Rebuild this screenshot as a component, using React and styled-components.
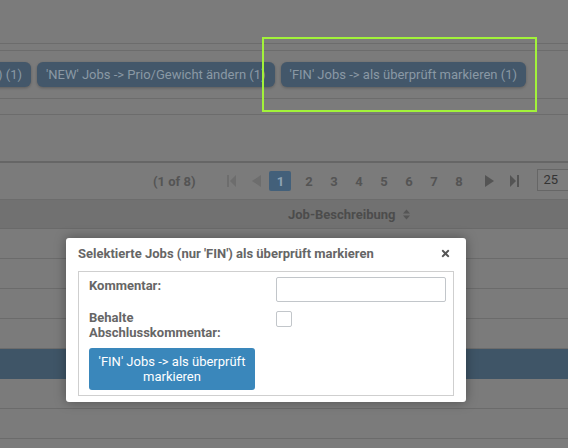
import React from "react";
import styled, { createGlobalStyle } from "styled-components";
import { FaTimes } from "react-icons/fa";

const Global = createGlobalStyle`
  html, body { margin: 0; padding: 0; }
  body { width: 568px; height: 448px; overflow: hidden; background: #7b7b7b; font-family: Roboto, "Liberation Sans", sans-serif; }
`;

const Page = styled.div`
  position: relative;
  width: 568px;
  height: 448px;
  overflow: hidden;
  background: #7b7b7b;
  font-family: Roboto, "Liberation Sans", sans-serif;
`;

const Band = styled.div`
  height: ${(p) => p.$h}px;
  border-bottom: ${(p) => p.$bw || 1}px solid ${(p) => p.$bc || "#6c6c6c"};
  background: ${(p) => p.$bg || "transparent"};
`;

const Toolbar = styled.div`
  height: 47px;
  border-bottom: 1px solid #6c6c6c;
  display: flex;
  align-items: center;
  justify-content: flex-end;
  gap: 6px;
  padding-right: 42px;
  overflow: hidden;
  white-space: nowrap;
`;

const ToolButton = styled.div`
  flex: none;
  height: 25px;
  line-height: 25px;
  padding: 0 9px;
  border-radius: 6px;
  background: #43576a;
  color: #8a99a5;
  font-size: 13px;
  box-shadow: 0 1px 3px rgba(0, 0, 0, 0.25);
`;

const Paginator = styled.div`
  height: 36px;
  border-bottom: 1px solid #6c6c6c;
  display: flex;
  align-items: center;
  padding-left: 153px;
  white-space: nowrap;
  color: #545454;
  font-size: 13px;
  font-weight: 700;
`;

const Report = styled.span`
  margin-right: 24px;
`;

const Cell = styled.span`
  flex: none;
  width: ${(p) => p.$w || 25}px;
  height: 20px;
  margin-left: ${(p) => p.$ml || 0}px;
  margin-right: ${(p) => p.$mr || 0}px;
  display: flex;
  align-items: center;
  justify-content: center;
  border-radius: 2px;
  background: ${(p) => (p.$active ? "#43607a" : "transparent")};
  color: ${(p) => (p.$active ? "#8ea3b4" : "#545454")};
`;

const PerPage = styled.div`
  flex: none;
  width: 50px;
  height: 22px;
  margin-left: 10px;
  margin-top: -2px;
  box-sizing: border-box;
  border: 1px solid #666;
  border-right: none;
  padding-left: 5px;
  line-height: 20px;
  font-weight: 400;
  font-size: 13px;
  color: #333;
  background: #7d7d7d;
`;

const HeaderRow = styled.div`
  height: 28px;
  border-bottom: 1px solid #6a6a6a;
  background: #717171;
  display: flex;
  align-items: center;
  padding-left: 288px;
  gap: 7px;
  color: #4c4c4c;
  font-size: 13px;
  font-weight: 700;
`;

const Row = styled.div`
  height: 29px;
  border-bottom: 1px solid ${(p) => (p.$selected ? "#3f5567" : "#6b6b6b")};
  background: ${(p) => (p.$selected ? "#3f5567" : "transparent")};
`;

const Highlight = styled.div`
  position: absolute;
  left: 262px;
  top: 37px;
  width: 275px;
  height: 75px;
  box-sizing: border-box;
  border: 2px solid #a2f23a;
`;

const Dialog = styled.div`
  position: absolute;
  left: 66px;
  top: 238px;
  width: 400px;
  height: 164px;
  box-sizing: border-box;
  background: #fff;
  border-radius: 3px;
  box-shadow: 0 0 12px rgba(0, 0, 0, 0.35);
  display: flex;
  flex-direction: column;
  padding: 0 12px 6px;
`;

const TitleBar = styled.div`
  height: 33px;
  display: flex;
  align-items: center;
  justify-content: space-between;
  padding-bottom: 3px;
  box-sizing: border-box;
`;

const Title = styled.span`
  font-size: 13px;
  font-weight: 700;
  color: #666;
`;

const Close = styled.span`
  display: flex;
  margin-right: 3px;
  color: #555;
  font-size: 11px;
`;

const Panel = styled.div`
  flex: 1;
  border: 1px solid #cfcfcf;
  padding: 5px 8px 4px 10px;
  display: grid;
  grid-template-columns: 187px 170px;
  row-gap: 8px;
  align-content: start;
`;

const Label = styled.label`
  font-size: 13px;
  font-weight: 700;
  color: #666;
  line-height: 15px;
  padding-top: ${(p) => p.$pt || 0}px;
`;

const TextInput = styled.div`
  height: 25px;
  box-sizing: border-box;
  border: 1px solid #c2c6ca;
  border-radius: 2px;
`;

const Checkbox = styled.div`
  width: 16px;
  height: 16px;
  box-sizing: border-box;
  border: 1px solid #c2c6ca;
  border-radius: 2px;
  margin-top: 1px;
`;

const PrimaryButton = styled.div`
  grid-column: 1 / 2;
  width: 166px;
  height: 42px;
  box-sizing: border-box;
  border-radius: 3px;
  background: #3a87bb;
  color: #fff;
  font-size: 13px;
  line-height: 15px;
  text-align: center;
  display: flex;
  align-items: center;
  justify-content: center;
  padding: 0 6px;
`;

const Tri = ({ dir, bar, color }) => {
  const w = bar ? 9 : 11;
  const pts =
    dir === "left"
      ? bar
        ? "9,0 9,12 3,6"
        : "10,0 10,12 1,6"
      : bar
      ? "0,0 0,12 6,6"
      : "1,0 1,12 10,6";
  return (
    <svg width={w} height="12" viewBox={`0 0 ${w} 12`}>
      <polygon points={pts} fill={color} />
      {bar && (dir === "left" ? <rect x="0" y="0" width="2" height="12" fill={color} /> : <rect x="7" y="0" width="2" height="12" fill={color} />)}
    </svg>
  );
};

const SortIcon = () => (
  <svg width="7" height="11" viewBox="0 0 7 11">
    <polygon points="0,4.5 7,4.5 3.5,0.5" fill="#555" />
    <polygon points="0,6.5 7,6.5 3.5,10.5" fill="#555" />
  </svg>
);

export default function App() {
  const pages = [2, 3, 4, 5, 6, 7, 8];
  return (
    <Page>
      <Global />
      <Band $h={43} />
      <Band $h={6} />
      <Toolbar>
        <ToolButton>Jobs stornieren (nur 'NEW', alle selektierten) (1)</ToolButton>
        <ToolButton>'NEW' Jobs -&gt; Prio/Gewicht ändern (1)</ToolButton>
        <ToolButton>'FIN' Jobs -&gt; als überprüft markieren (1)</ToolButton>
      </Toolbar>
      <Band $h={15} />
      <Band $h={46} $bw={2} $bc="#666" />
      <Paginator>
        <Report>(1 of 8)</Report>
        <Cell><Tri dir="left" bar color="#6d6d6d" /></Cell>
        <Cell><Tri dir="left" color="#6d6d6d" /></Cell>
        <Cell $w={22} $mr={5} $active>1</Cell>
        {pages.map((p) => (
          <Cell key={p}>{p}</Cell>
        ))}
        <Cell $ml={6}><Tri dir="right" color="#545454" /></Cell>
        <Cell><Tri dir="right" bar color="#545454" /></Cell>
        <PerPage>25</PerPage>
      </Paginator>
      <HeaderRow>
        <span>Job-Beschreibung</span>
        <SortIcon />
      </HeaderRow>
      <Row />
      <Row />
      <Row />
      <Row />
      <Row $selected />
      <Row />
      <Row />
      <Row />
      <Highlight />
      <Dialog>
        <TitleBar>
          <Title>Selektierte Jobs (nur 'FIN') als überprüft markieren</Title>
          <Close><FaTimes /></Close>
        </TitleBar>
        <Panel>
          <Label $pt={1}>Kommentar:</Label>
          <TextInput />
          <Label>Behalte<br />Abschlusskommentar:</Label>
          <Checkbox />
          <PrimaryButton>'FIN' Jobs -&gt; als überprüft markieren</PrimaryButton>
        </Panel>
      </Dialog>
    </Page>
  );
}
